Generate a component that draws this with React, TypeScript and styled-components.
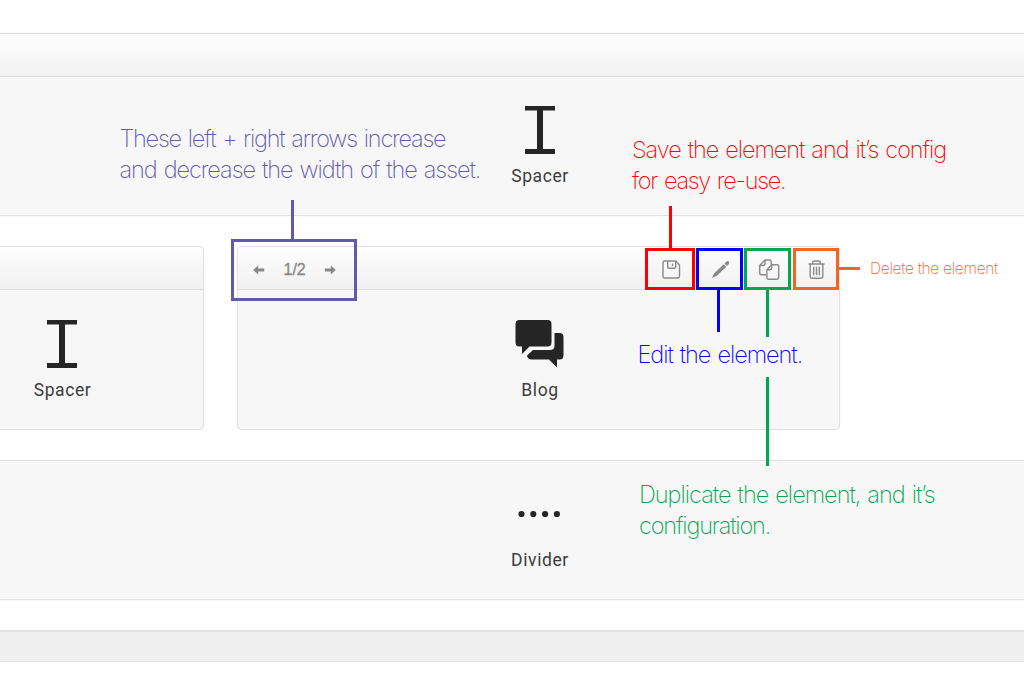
import React from 'react';
import styled, { createGlobalStyle } from 'styled-components';

const GlobalStyle = createGlobalStyle`
  *, *::before, *::after { box-sizing: border-box; }
  html, body { margin: 0; background: #fff; }
  body { overflow: hidden; font-family: Roboto, "Liberation Sans", sans-serif; }
`;

const Page = styled.main`
  position: relative;
  width: 1024px;
  height: 677px;
  overflow: hidden;
  padding-top: 33px;
  display: flex;
  flex-direction: column;
  background: #fff;
`;

const Row = styled.section`
  flex: none;
  display: flex;
  gap: 33px;
  margin-bottom: 30px;
`;

const Card = styled.article<{ $width: number; $height: number; $edge?: 'full' | 'left' }>`
  flex: none;
  display: flex;
  flex-direction: column;
  width: ${p => p.$width}px;
  height: ${p => p.$height}px;
  overflow: hidden;
  background: #f7f7f7;
  border: solid #e1e1e1;
  border-width: ${p => (p.$edge === 'full' ? '1px 0' : p.$edge === 'left' ? '1px 1px 1px 0' : '1px')};
  border-radius: ${p => (p.$edge === 'full' ? '0' : p.$edge === 'left' ? '0 5px 5px 0' : '5px')};
  box-shadow: 0 0 1px #dedede;
`;

const CardHeader = styled.header`
  flex: none;
  display: flex;
  align-items: center;
  justify-content: space-between;
  height: 43px;
  padding: 3px 13px 0 15px;
  border-bottom: 1px solid #dfdfdf;
  background: linear-gradient(#fefefe, #f1f1f1);
`;

const CardBody = styled.div<{ $center: number; $top: number }>`
  display: flex;
  flex-direction: column;
  align-items: center;
  width: ${p => p.$center * 2}px;
  padding-top: ${p => p.$top}px;
`;

const Label = styled.span<{ $gap?: number }>`
  margin-top: ${p => p.$gap ?? 10}px;
  padding-left: 1px;
  color: #3c3c3c;
  font-size: 17.5px;
  font-weight: 400;
  line-height: 24px;
  letter-spacing: 0.6px;
`;

const WidthControl = styled.div`
  display: flex;
  align-items: center;
  gap: 18.5px;
  color: #888;
  font: 16px/20px "Liberation Sans", sans-serif;
  -webkit-text-stroke: 0.3px #888;
`;

const Actions = styled.div`
  display: flex;
  align-items: center;
  gap: 28px;
  color: #8a8a8a;
`;

const Footer = styled.footer`
  flex: none;
  height: 32px;
  border-top: 2px solid #e3e3e3;
  border-bottom: 1px solid #e2e2e2;
  background: #efefef;
`;

const Frame = styled.div<{ $x: number; $y: number; $w: number; $h: number; $color: string }>`
  position: absolute;
  left: ${p => p.$x}px;
  top: ${p => p.$y}px;
  width: ${p => p.$w}px;
  height: ${p => p.$h}px;
  border: 3px solid ${p => p.$color};
`;

const Connector = styled.div<{ $x: number; $y: number; $w: number; $h: number; $color: string }>`
  position: absolute;
  left: ${p => p.$x}px;
  top: ${p => p.$y}px;
  width: ${p => p.$w}px;
  height: ${p => p.$h}px;
  background: ${p => p.$color};
`;

const Note = styled.p<{ $x: number; $y: number; $color: string; $small?: boolean }>`
  position: absolute;
  left: ${p => p.$x}px;
  top: ${p => p.$y}px;
  margin: 0;
  color: ${p => p.$color};
  font-family: Inter, "Liberation Sans", sans-serif;
  font-weight: 200;
  font-size: ${p => (p.$small ? 15.5 : 23.5)}px;
  line-height: ${p => (p.$small ? 20 : 31)}px;
  word-spacing: ${p => (p.$small ? 0 : 1.5)}px;
  white-space: nowrap;
`;

const Line = styled.span<{ $spacing: number }>`
  display: block;
  width: max-content;
  letter-spacing: ${p => p.$spacing}px;
`;

const SpacerIcon = () => (
  <svg width="30" height="48" viewBox="0 0 30 48" fill="#252525">
    <path d="M0 0h30v4.500H18v38.500h12V48H0v-5h12V4.500H0z" />
  </svg>
);

const BlogIcon = () => (
  <svg width="48" height="48" viewBox="0.500 0 48 48" fill="#252525" overflow="visible">
    <path d="M4 0h28q4 0 4 4v18.500q0 4-4 4H14L6.500 34v-7.500H4q-4 0-4-4V4q0-4 4-4z" />
    <path d="M39 13h5q4 0 4 4v18.500q0 4-4 4h-2.500V47.500L33.500 39.500H16q-4 0-4.500-4L17.500 30H34.500q4.500 0 4.500-4.500z" />
  </svg>
);

const DividerIcon = () => (
  <svg width="46" height="6" viewBox="0 0 46 6" fill="#252525" overflow="visible">
    <circle cx="4.500" cy="3" r="3.100" />
    <circle cx="16.300" cy="3" r="3.100" />
    <circle cx="28.100" cy="3" r="3.100" />
    <circle cx="39.900" cy="3" r="3.100" />
  </svg>
);

const ArrowIcon = ({ flip = false }: { flip?: boolean }) => (
  <svg width="12" height="10" viewBox="0 0 12 10" fill="currentColor">
    <path transform={flip ? 'translate(12 0) scale(-1 1)' : undefined} d="M.200 5 5.200 .500v3h6v3h-6v3z" />
  </svg>
);

const SaveIcon = () => (
  <svg width="20" height="20" viewBox="0 0.500 20 20" fill="none" stroke="currentColor" strokeWidth="1.400">
    <path d="M2.500 1.500h11.300l3.700 4v11.300q0 1.700-1.700 1.700H2.700q-1.700 0-1.700-1.700V3q0-1.500 1.500-1.500z" />
    <path d="M5.700 1.500v6.300q0 1 1 1h6q1 0 1-1V1.500M10.500 4v2.500" />
  </svg>
);

const EditIcon = () => (
  <svg width="20" height="20" viewBox="-0.500 0.500 20 20" fill="currentColor">
    <path d="M1.500 18.500 3.500 14 13.200 4.700l2.600 2.600-9.600 9.200zM14 3.900l2-1.900q1.200-1 2.300 0t.1 2.400l-1.900 2.100z" />
  </svg>
);

const CopyIcon = () => (
  <svg width="22" height="22" viewBox="0 0.500 22 22" fill="none" stroke="currentColor" strokeWidth="1.400" strokeLinejoin="round">
    <path d="M8.200 16.200H3.500q-1.800 0-1.800-1.800V7L7 1.500h4.500q1.700 0 1.700 1.700v3M7 1.500V5q0 2-2 2H1.700" />
    <path d="m8.900 11.200 4.800-5h5.300q1.700 0 1.700 1.700v11.200q0 1.700-1.700 1.700h-8.400q-1.700 0-1.700-1.700zM13.700 6.200v3q0 2-2 2H8.900" />
  </svg>
);

const TrashIcon = () => (
  <svg width="18" height="20" viewBox="0.500 0.500 18 20" fill="none" stroke="currentColor" strokeWidth="1.400">
    <path d="M1 4.500h16M5.200 4.300V3q0-1.500 1.500-1.500h4.600q1.500 0 1.500 1.500v1.300M2.700 4.700V17q0 1.700 1.700 1.700h9.200q1.700 0 1.700-1.700V4.700M6.200 7.200v8.500M9 7.200v8.500M11.800 7.200v8.500" />
  </svg>
);

const purple = '#5f5aaa';
const red = '#ff0000';
const blue = '#0000ff';
const green = '#00a651';
const orange = '#f26522';

export default function App() {
  return (
    <>
      <GlobalStyle />
      <Page>
        <Row>
          <Card $width={1024} $height={183} $edge="full">
            <CardHeader />
            <CardBody $center={539.5} $top={29}><SpacerIcon /><Label $gap={10}>Spacer</Label></CardBody>
          </Card>
        </Row>
        <Row>
          <Card $width={204} $height={184} $edge="left">
            <CardHeader />
            <CardBody $center={62} $top={30}><SpacerIcon /><Label>Spacer</Label></CardBody>
          </Card>
          <Card $width={603} $height={184}>
            <CardHeader>
              <WidthControl><ArrowIcon /><span>1/2</span><ArrowIcon flip /></WidthControl>
              <Actions><SaveIcon /><EditIcon /><CopyIcon /><TrashIcon /></Actions>
            </CardHeader>
            <CardBody $center={301.5} $top={30}><BlogIcon /><Label>Blog</Label></CardBody>
          </Card>
        </Row>
        <Row>
          <Card $width={1024} $height={140} $edge="full">
            <CardBody $center={539.5} $top={50}><DividerIcon /><Label $gap={31}>Divider</Label></CardBody>
          </Card>
        </Row>
        <Footer />

        <Connector $x={291} $y={200} $w={3} $h={40} $color={purple} />
        <Frame $x={231} $y={239} $w={126} $h={62} $color={purple} />
        <Note $x={119.5} $y={123} $color={purple}>
          <Line $spacing={-1.21}>These left + right arrows increase</Line>
          <Line $spacing={-1.06}>and decrease the width of the asset.</Line>
        </Note>

        <Connector $x={669} $y={206} $w={3} $h={43} $color={red} />
        <Frame $x={645} $y={248} $w={50} $h={42} $color={red} />
        <Note $x={632} $y={134} $color={red}>
          <Line $spacing={-1.05}>Save the element and it’s config</Line>
          <Line $spacing={-1.27}>for easy re-use.</Line>
        </Note>

        <Connector $x={717} $y={289} $w={3} $h={43} $color={blue} />
        <Frame $x={696} $y={248} $w={47} $h={42} $color={blue} />
        <Note $x={637.5} $y={339} $color={blue}>
          <Line $spacing={-1.03}>Edit the element.</Line>
        </Note>

        <Connector $x={766} $y={289} $w={3} $h={48} $color={green} />
        <Connector $x={766} $y={377} $w={3} $h={89} $color={green} />
        <Frame $x={744} $y={248} $w={47} $h={42} $color={green} />
        <Note $x={639} $y={479} $color={green}>
          <Line $spacing={-1}>Duplicate the element, and it’s</Line>
          <Line $spacing={-1.15}>configuration.</Line>
        </Note>

        <Connector $x={838} $y={267} $w={22} $h={3} $color={orange} />
        <Frame $x={793} $y={248} $w={46} $h={42} $color={orange} />
        <Note $x={870} $y={259} $color={orange} $small>
          <Line $spacing={-0.3}>Delete the element</Line>
        </Note>
      </Page>
    </>
  );
}
